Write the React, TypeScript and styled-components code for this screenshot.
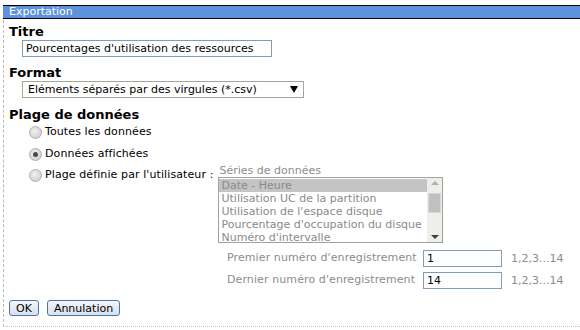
import React from "react";
import styled, { createGlobalStyle } from "styled-components";

const Global = createGlobalStyle`
  html, body { margin: 0; padding: 0; background: #fff; }
  body { font-family: "DejaVu Sans", Verdana, sans-serif; font-size: 11px; color: #000; }
`;

const Page = styled.div`
  width: 580px;
  height: 330px;
  padding-top: 5px;
  box-sizing: border-box;
`;

const Panel = styled.div`
  margin-left: 3px;
  width: 577px;
  height: 322px;
  display: flex;
  flex-direction: column;
  box-sizing: border-box;
  border-left: 1px dashed #b8b8b8;
  border-bottom: 1px dotted #d0b8d8;
`;

const TitleBar = styled.div`
  height: 12px;
  background: #5d93dc;
  border-top: 1px solid #000;
  border-bottom: 1px solid #000;
  margin-left: -1px;
  color: #fff;
  font-size: 11px;
  line-height: 12px;
  padding-left: 6px;
`;

const Body = styled.div`
  padding: 5px 0 0 5px;
  display: flex;
  flex-direction: column;
  flex: 1;
`;

const Heading = styled.div<{ $mt?: number }>`
  font-weight: bold;
  font-size: 13px;
  line-height: 15px;
  margin-top: ${(p) => p.$mt ?? 0}px;
`;

const TextInput = styled.input<{ $w: number }>`
  font-family: "DejaVu Sans", Verdana, sans-serif;
  font-size: 11px;
  box-sizing: border-box;
  width: ${(p) => p.$w}px;
  height: 17px;
  border: 1px solid #7f9db9;
  padding: 0 3px;
  color: #000;
  outline: none;
`;

const Indented = styled.div`
  margin-left: 13px;
  margin-top: 1px;
  display: flex;
`;

const Select = styled.div`
  box-sizing: border-box;
  width: 282px;
  height: 17px;
  border: 1px solid #a0a898;
  display: flex;
  align-items: center;
  justify-content: space-between;
  padding: 0 5px 0 5px;
`;

const Caret = styled.span`
  width: 0;
  height: 0;
  border-left: 4px solid transparent;
  border-right: 4px solid transparent;
  border-top: 7px solid #000;
`;

const RadioList = styled.div`
  display: flex;
  flex-direction: column;
  margin-left: 20px;
  margin-top: 3px;
`;

const RadioRow = styled.div<{ $h?: number }>`
  display: flex;
  align-items: flex-start;
  height: ${(p) => (p.$h ? `${p.$h}px` : "auto")};
`;

const Radio = styled.span<{ $checked?: boolean }>`
  width: 11px;
  height: 11px;
  border-radius: 50%;
  border: 1px solid #b0b0b0;
  background: radial-gradient(circle at 40% 40%, #f0f0f0, #c8c8c8);
  display: flex;
  align-items: center;
  justify-content: center;
  margin-right: 3px;
  margin-top: 1px;
  flex-shrink: 0;
  &::after {
    content: "";
    width: 5px;
    height: 5px;
    border-radius: 50%;
    background: #4a4a4a;
    display: ${(p) => (p.$checked ? "block" : "none")};
  }
`;

const RadioLabel = styled.span`
  line-height: 14px;
  white-space: nowrap;
  letter-spacing: 0.1px;
`;

const SeriesBlock = styled.div`
  display: flex;
  flex-direction: column;
  margin-left: 6px;
  margin-top: -3px;
`;

const GrayLabel = styled.div`
  color: #8c8c8c;
  line-height: 11px;
  margin-bottom: 1px;
`;

const ListBox = styled.div`
  width: 225px;
  height: 66px;
  box-sizing: border-box;
  border: 1px solid #a0a0a0;
  display: flex;
  margin-left: -1px;
`;

const Options = styled.div`
  flex: 1;
  display: flex;
  flex-direction: column;
  padding-top: 1px;
`;

const Option = styled.div<{ $selected?: boolean }>`
  height: 13px;
  line-height: 13px;
  padding-left: 2px;
  color: #8a8a8a;
  background: ${(p) => (p.$selected ? "#c4c4c4" : "transparent")};
  white-space: nowrap;
`;

const ScrollBar = styled.div`
  width: 15px;
  background: #eeeeea;
  display: flex;
  flex-direction: column;
  align-items: center;
  justify-content: space-between;
  padding: 3px 0 3px;
  box-sizing: border-box;
`;

const Thumb = styled.div`
  width: 13px;
  height: 20px;
  background: #c0c0c0;
  border: 1px solid #d8d8d8;
  box-sizing: border-box;
  margin-top: -14px;
`;

const ArrowUp = styled.span`
  width: 0;
  height: 0;
  border-left: 4px solid transparent;
  border-right: 4px solid transparent;
  border-bottom: 4px solid #b0b0b0;
`;

const ArrowDown = styled.span`
  width: 0;
  height: 0;
  border-left: 4px solid transparent;
  border-right: 4px solid transparent;
  border-top: 4px solid #404040;
`;

const RecordGrid = styled.div`
  display: grid;
  grid-template-columns: 196px 88px auto;
  row-gap: 5px;
  margin-left: 218px;
  margin-top: 7px;
  align-items: center;
`;

const RecordLabel = styled.span`
  color: #8c8c8c;
  margin-top: -3px;
  letter-spacing: 0.1px;
`;

const Hint = styled.span`
  color: #8c8c8c;
`;

const Buttons = styled.div`
  display: flex;
  gap: 8px;
  margin-top: auto;
  margin-bottom: 10px;
`;

const Button = styled.button`
  font-family: "DejaVu Sans", Verdana, sans-serif;
  font-size: 11px;
  height: 16px;
  padding: 0 6px;
  border: 1px solid #4d73a8;
  border-radius: 3px;
  background: linear-gradient(#f4f6fa, #d8e0ec);
  color: #000;
  line-height: 13px;
`;

export default function App() {
  return (
    <Page>
      <Global />
      <Panel>
        <TitleBar>Exportation</TitleBar>
        <Body>
          <Heading>Titre</Heading>
          <Indented>
            <TextInput $w={250} defaultValue="Pourcentages d'utilisation des ressources" />
          </Indented>
          <Heading $mt={8}>Format</Heading>
          <Indented>
            <Select>
              <span>Eléments séparés par des virgules (*.csv)</span>
              <Caret />
            </Select>
          </Indented>
          <Heading $mt={9}>Plage de données</Heading>
          <RadioList>
            <RadioRow $h={22}>
              <Radio />
              <RadioLabel>Toutes les données</RadioLabel>
            </RadioRow>
            <RadioRow $h={21}>
              <Radio $checked />
              <RadioLabel>Données affichées</RadioLabel>
            </RadioRow>
            <RadioRow>
              <Radio />
              <RadioLabel>Plage définie par l'utilisateur :</RadioLabel>
              <SeriesBlock>
                <GrayLabel>Séries de données</GrayLabel>
                <ListBox>
                  <Options>
                    <Option $selected>Date - Heure</Option>
                    <Option>Utilisation UC de la partition</Option>
                    <Option>Utilisation de l'espace disque</Option>
                    <Option>Pourcentage d'occupation du disque</Option>
                    <Option>Numéro d'intervalle</Option>
                  </Options>
                  <ScrollBar>
                    <ArrowUp />
                    <Thumb />
                    <ArrowDown />
                  </ScrollBar>
                </ListBox>
              </SeriesBlock>
            </RadioRow>
          </RadioList>
          <RecordGrid>
            <RecordLabel>Premier numéro d'enregistrement</RecordLabel>
            <TextInput $w={79} defaultValue="1" />
            <Hint>1,2,3...14</Hint>
            <RecordLabel>Dernier numéro d'enregistrement</RecordLabel>
            <TextInput $w={79} defaultValue="14" />
            <Hint>1,2,3...14</Hint>
          </RecordGrid>
          <Buttons>
            <Button>OK</Button>
            <Button>Annulation</Button>
          </Buttons>
        </Body>
      </Panel>
    </Page>
  );
}
